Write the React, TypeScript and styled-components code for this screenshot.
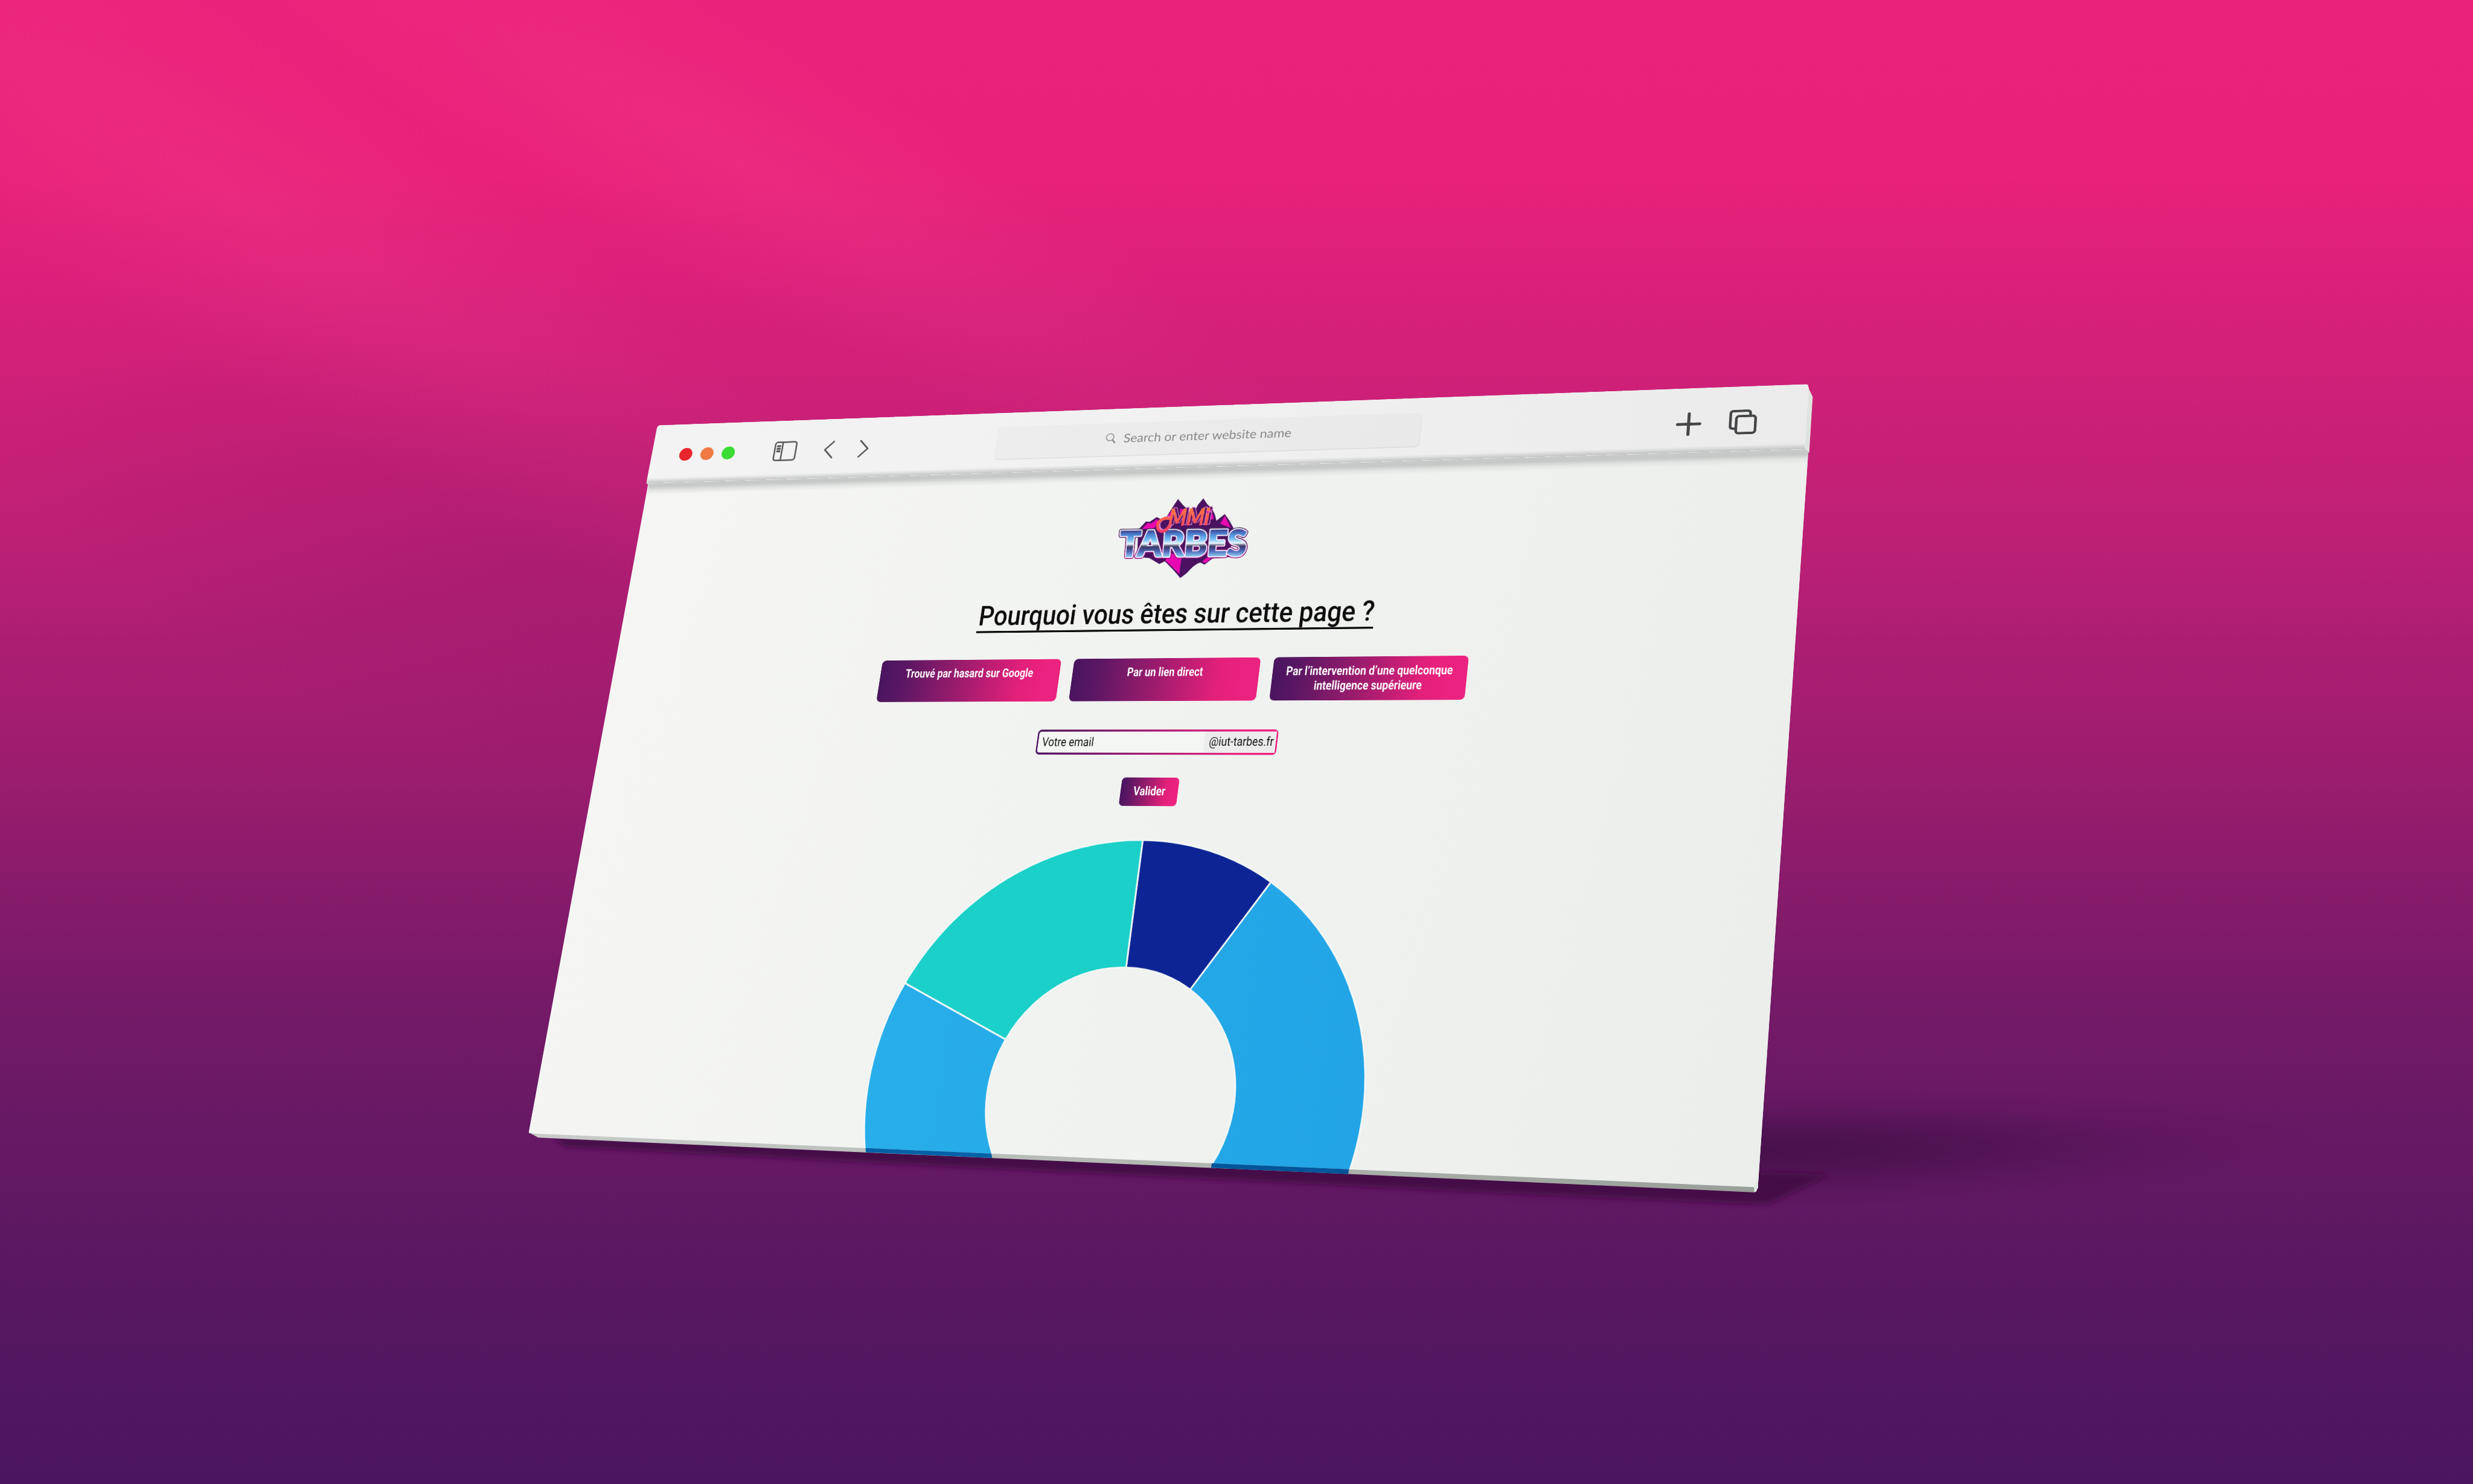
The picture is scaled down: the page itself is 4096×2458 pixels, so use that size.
import React, { useLayoutEffect, useRef, useState } from 'react';
import styled, { createGlobalStyle } from 'styled-components';

type Point = [number, number];

const SCALE = 4096 / 5000;

const GlobalStyle = createGlobalStyle`
  html, body { margin: 0; padding: 0; background: #4d155e; overflow: hidden; }
  *, *::before, *::after { box-sizing: border-box; }
`;

/* ---------- perspective helpers ---------- */

function solve(rows: number[][], rhs: number[]): number[] {
  const n = rhs.length;
  const m = rows.map((r, i) => [...r, rhs[i]]);
  for (let i = 0; i < n; i++) {
    let p = i;
    for (let j = i; j < n; j++) if (Math.abs(m[j][i]) > Math.abs(m[p][i])) p = j;
    [m[i], m[p]] = [m[p], m[i]];
    for (let j = 0; j < n; j++) {
      if (j === i) continue;
      const f = m[j][i] / m[i][i];
      for (let k = i; k <= n; k++) m[j][k] -= f * m[i][k];
    }
  }
  return m.map((r, i) => r[n] / r[i]);
}

/* matrix3d that carries a w×h box onto four corners (TL, TR, BR, BL) */
function project(w: number, h: number, corners: Point[]): string {
  const src: Point[] = [[0, 0], [w, 0], [w, h], [0, h]];
  const rows: number[][] = [];
  const rhs: number[] = [];
  src.forEach(([x, y], i) => {
    const u = corners[i][0] * SCALE;
    const v = corners[i][1] * SCALE;
    rows.push([x, y, 1, 0, 0, 0, -x * u, -y * u]);
    rhs.push(u);
    rows.push([0, 0, 0, x, y, 1, -x * v, -y * v]);
    rhs.push(v);
  });
  const [a, b, c, d, e, f, g, k] = solve(rows, rhs);
  return `matrix3d(${[a, d, 0, g, b, e, 0, k, 0, 0, 1, 0, c, f, 0, 1].map(n => n.toFixed(12)).join(',')})`;
}

const PAGE_MATRIX = project(2400, 1350, [[1312, 980], [3657, 914], [3555, 2402], [1069, 2291]]);
const BAR_MATRIX = project(2400, 136, [[1330, 860], [3656, 777], [3649, 908], [1307, 977]]);

const outline = (points: Point[]) =>
  `polygon(${points.map(([x, y]) => `${(x * SCALE).toFixed(2)}px ${(y * SCALE).toFixed(2)}px`).join(', ')})`;

const PAGE_OUTLINE = outline([[1312, 970], [3657, 900], [3555.5, 2380], [3554, 2403], [1078, 2294], [1069, 2290]]);
const BAR_OUTLINE = outline([
  [1308, 970], [1328, 866], [1330, 862], [1334, 860], [3652, 777], [3655, 778], [3657, 784], [3649, 908.5], [1307, 977.5],
]);

/* ---------- scene ---------- */

const Scene = styled.main`
  position: relative;
  width: 4096px;
  height: 2458px;
  overflow: hidden;
  background: linear-gradient(
    180deg,
    #eb227b 0%,
    #e8217a 12%,
    #d92079 20%,
    #cb2077 28%,
    #bd2075 36%,
    #ab1e72 44%,
    #991c6e 53%,
    #871b6b 60%,
    #741a67 68%,
    #671964 76%,
    #5c1862 84%,
    #521760 92%,
    #4c165e 100%
  );
`;

const Overlay = styled.svg`
  position: absolute;
  inset: 0;
  width: 4096px;
  height: 2458px;
`;

const Sheet = styled.div<{ $outline: string; $fill: string }>`
  position: absolute;
  inset: 0;
  background: ${p => p.$fill};
  clip-path: ${p => p.$outline};
`;

const Plane = styled.section<{ $w: number; $h: number; $matrix: string }>`
  position: absolute;
  left: 0;
  top: 0;
  width: ${p => p.$w}px;
  height: ${p => p.$h}px;
  transform-origin: 0 0;
  transform: ${p => p.$matrix};
`;

/* ---------- toolbar ---------- */

const Toolbar = styled(Plane)`
  display: flex;
  align-items: flex-start;
  padding-left: 64px;
  background:
    linear-gradient(180deg, transparent 91%, rgba(150, 156, 152, 0.5) 100%),
    linear-gradient(90deg, #f3f3f3 0%, #f1f1f1 45%, #ebebeb 100%);
`;

const Lights = styled.div`
  display: flex;
  gap: 19px;
  padding-top: 56px;
`;

const Light = styled.span<{ $c: string }>`
  width: 30px;
  height: 30px;
  border-radius: 50%;
  background: ${p => p.$c};
`;

const BarIcon = styled.svg<{ $ml: number; $mt: number }>`
  flex: none;
  margin-left: ${p => p.$ml}px;
  margin-top: ${p => p.$mt}px;
  overflow: visible;
`;

const Address = styled.div`
  display: flex;
  align-items: flex-start;
  width: 884px;
  height: 73px;
  margin: 32px 0 0 280px;
  padding-left: 236px;
  border-radius: 10px;
  background: linear-gradient(90deg, #ededed, #e9e9e9);
  box-shadow: 1px 1.5px 1px rgba(0, 0, 0, 0.08);
`;

const Placeholder = styled.span`
  height: 40px;
  margin: 14px 0 0 16px;
  font: 400 26.5px/40px Lato, "Open Sans", sans-serif;
  color: #868787;
  white-space: nowrap;
`;

/* ---------- web page ---------- */

const Page = styled(Plane)`
  display: flex;
  flex-direction: column;
  align-items: center;
  padding: 50px 10px 0 0;
  overflow: hidden;
  background:
    linear-gradient(180deg, #bfc2c0 0px, #c8cbc9 5px, #e2e4e2 13px, transparent 22px),
    linear-gradient(100deg, #f5f6f4 0%, #f1f3f0 45%, #ebeeeb 100%);
`;

const FONT = 'Roboto, "Noto Sans", sans-serif';

const FitBox = styled.span<{ $w: number }>`
  display: block;
  width: ${p => p.$w}px;
  white-space: nowrap;
`;

const FitInner = styled.span`
  display: inline-block;
  transform-origin: 0 50%;
`;

/* squeezes one line of text into a fixed measure */
function Fit({ w, children }: { w: number; children: React.ReactNode }) {
  const ref = useRef<HTMLSpanElement>(null);
  const [k, setK] = useState(1);
  useLayoutEffect(() => {
    if (ref.current) setK(w / ref.current.offsetWidth);
  }, [w]);
  return (
    <FitBox $w={w}>
      <FitInner ref={ref} style={{ transform: `scaleX(${k})` }}>{children}</FitInner>
    </FitBox>
  );
}

const Logo = styled.svg`
  flex: none;
  width: 290px;
  height: 180px;
  overflow: visible;
`;

const Title = styled.h1`
  flex: none;
  width: 813px;
  height: 65px;
  margin: 38px 0 0;
  padding-left: 1px;
  border-bottom: 4px solid #0d0d0d;
  font: 500 56.5px/60px ${FONT};
  color: #0d0d0d;
`;

const Choices = styled.div`
  display: grid;
  flex: none;
  grid-template-columns: repeat(3, 381px);
  gap: 27px;
  margin-top: 54.5px;
`;

const gradient = 'linear-gradient(94deg, #4b155f 2%, #5b1763 14%, #a31c6e 48%, #e3207a 78%, #ec2280 92%)';

const Choice = styled.button`
  display: flex;
  flex-direction: column;
  align-items: center;
  justify-content: flex-start;
  height: 86px;
  padding: 13px 0 0;
  border: 0;
  border-radius: 9px;
  background: ${gradient};
  color: #fff;
  font: 700 24.5px/29.5px ${FONT};
`;

const Email = styled.div`
  display: flex;
  flex: none;
  justify-content: space-between;
  width: 488px;
  height: 50px;
  margin-top: 57.5px;
  padding-left: 8px;
  border: 4px solid transparent;
  border-width: 4px 3px;
  border-radius: 8px;
  background:
    linear-gradient(#f4f6f4, #f4f6f4) padding-box,
    linear-gradient(90deg, #4b155f 0%, #ee2280 85%) border-box;
  font: 400 24.5px/42px ${FONT};
  color: #161616;
`;

const Suffix = styled.span`
  width: 143px;
  padding-left: 10px;
  line-height: 40px;
  background: #ececec;
`;

const Submit = styled.button`
  display: flex;
  flex: none;
  justify-content: center;
  width: 116px;
  height: 56px;
  margin-top: 45px;
  padding: 11px 0 0;
  border: 0;
  border-radius: 8px;
  background: ${gradient};
  color: #fff;
  font: 700 24.5px/32px ${FONT};
`;

const Chart = styled.svg`
  flex: none;
  width: 978px;
  height: 978px;
  margin-top: 65.6px;
`;

const SLICES = [
  { value: 1, color: '#0d2594' },
  { value: 8, color: 'url(#sky)' },
  { value: 2, color: '#1bd0c8' },
];

function slicePath(from: number, to: number, R: number, r: number): string {
  const pt = (a: number, q: number) => `${(489 + q * Math.sin(a)).toFixed(2)} ${(489 - q * Math.cos(a)).toFixed(2)}`;
  const large = to - from > Math.PI ? 1 : 0;
  return `M${pt(from, R)}A${R} ${R} 0 ${large} 1 ${pt(to, R)}L${pt(to, r)}A${r} ${r} 0 ${large} 0 ${pt(from, r)}Z`;
}

function Donut() {
  const total = SLICES.reduce((s, x) => s + x.value, 0);
  let angle = 0;
  return (
    <Chart viewBox="0 0 978 978">
      <defs>
        <linearGradient id="sky" x1="0" x2="1" y1="0" y2="0">
          <stop offset="0" stopColor="#28aeea" />
          <stop offset="1" stopColor="#22a4e6" />
        </linearGradient>
      </defs>
      {SLICES.map(s => {
        const from = angle;
        angle += (s.value / total) * Math.PI * 2;
        return <path key={s.color} d={slicePath(from, angle, 488.5, 243.5)} fill={s.color} stroke="#f4f8f8" strokeWidth="3.2" />;
      })}
    </Chart>
  );
}

function Brand() {
  return (
    <Logo viewBox="0 0 290 180">
      <defs>
        <linearGradient id="chrome" x1="0" x2="0" y1="284" y2="446" gradientUnits="userSpaceOnUse">
          <stop offset="0" stopColor="#3f4a98" />
          <stop offset="0.18" stopColor="#4f8fdc" />
          <stop offset="0.36" stopColor="#7fc4f4" />
          <stop offset="0.5" stopColor="#eef8ff" />
          <stop offset="0.56" stopColor="#77788f" />
          <stop offset="0.62" stopColor="#3a3868" />
          <stop offset="0.78" stopColor="#4d64b4" />
          <stop offset="1" stopColor="#8fd0f8" />
        </linearGradient>
        <linearGradient id="neon" x1="0" x2="0" y1="150" y2="290" gradientUnits="userSpaceOnUse">
          <stop offset="0" stopColor="#ff7a45" />
          <stop offset="1" stopColor="#fb3a68" />
        </linearGradient>
        <linearGradient id="rim" x1="0" x2="0" y1="260" y2="460" gradientUnits="userSpaceOnUse">
          <stop offset="0" stopColor="#4b4560" />
          <stop offset="0.45" stopColor="#5b1a66" />
          <stop offset="1" stopColor="#a01380" />
        </linearGradient>
      </defs>
      <g transform="matrix(.3417 .00733 .0433 .3367 -65 -20.7)">
        <path d="M304 274 L352 222 L375 224 L418 195 L440 206 L476 196 L504 150 L547 83 L575 118 L604 146 L622 176 L655 146 L668 120 L701 80 L725 116 L752 142 L770 178 L780 218 L830 177 L856 214 L882 262 L860 440 L756 450 L708 487 L682 474 C640 490 620 520 600 540 L562 570 L520 520 L468 468 L434 484 L375 448 L300 440 Z" fill="#4a1260" />
        <path d="M326 270 L362 232 L384 234 L420 206 L428 226 L404 262 Z M476 200 L512 150 L530 138 L520 200 Z M560 142 L590 150 L600 168 L560 176 Z M700 160 L722 128 L750 150 L764 206 L740 214 Z M804 238 L830 186 L866 262 Z M470 462 L505 415 L568 450 L556 545 L520 508 Z M694 468 L720 446 L752 448 L712 478 Z" fill="#e808b0" />
        <g transform="translate(0 444) skewX(-5) rotate(-.6) translate(0 -444)" fontFamily="Lato, sans-serif" fontWeight="900" fontSize="216" strokeLinejoin="round">
          <text x="186" y="441" textLength="768" lengthAdjust="spacingAndGlyphs" fill="none" stroke="url(#rim)" strokeWidth="30">TARBES</text>
          <text x="186" y="441" textLength="768" lengthAdjust="spacingAndGlyphs" fill="none" stroke="#fbe9fb" strokeWidth="20">TARBES</text>
          <text x="186" y="441" textLength="768" lengthAdjust="spacingAndGlyphs" fill="url(#chrome)" stroke="url(#chrome)" strokeWidth="7">TARBES</text>
        </g>
        <g strokeLinejoin="round" strokeLinecap="round">
          <path d="M500 204 C450 196 414 226 424 264 C436 292 470 292 494 250" fill="none" stroke="#d67fc8" strokeWidth="16" transform="translate(10 -6)" />
          <path d="M500 204 C450 196 414 226 424 264 C436 292 470 292 494 250" fill="none" stroke="url(#neon)" strokeWidth="18" />
          <g fontFamily="Lato, sans-serif" fontWeight="900" fontStyle="italic" fontSize="146" transform="translate(0 258) skewX(-6) rotate(-1) translate(0 -258)">
            <text x="498" y="252" textLength="250" lengthAdjust="spacingAndGlyphs" fill="#5a1468" stroke="#d67fc8" strokeWidth="5">MMi</text>
            <text x="484" y="258" textLength="250" lengthAdjust="spacingAndGlyphs" fill="url(#neon)">MMi</text>
          </g>
        </g>
      </g>
    </Logo>
  );
}

export default function App() {
  return (
    <>
      <GlobalStyle />
      <Scene>
        <Overlay viewBox="0 0 5000 3000">
          <defs>
            <filter id="soft" filterUnits="userSpaceOnUse" x="900" y="2100" width="3400" height="600"><feGaussianBlur stdDeviation="6" /></filter>
            <radialGradient id="glow">
              <stop offset="0" stopColor="#ff5aa0" stopOpacity="0.15" />
              <stop offset="0.5" stopColor="#ff5aa0" stopOpacity="0.07" />
              <stop offset="1" stopColor="#ff5aa0" stopOpacity="0" />
            </radialGradient>
            <radialGradient id="dusk">
              <stop offset="0" stopColor="#7a1060" stopOpacity="0.2" />
              <stop offset="0.5" stopColor="#7a1060" stopOpacity="0.1" />
              <stop offset="1" stopColor="#7a1060" stopOpacity="0" />
            </radialGradient>
            <radialGradient id="cast">
              <stop offset="0" stopColor="#420f48" stopOpacity="0.85" />
              <stop offset="0.35" stopColor="#420f48" stopOpacity="0.6" />
              <stop offset="0.7" stopColor="#461049" stopOpacity="0.2" />
              <stop offset="1" stopColor="#461049" stopOpacity="0" />
            </radialGradient>
          </defs>
          <ellipse cx="500" cy="420" rx="1500" ry="330" transform="rotate(32 500 420)" fill="url(#glow)" />
          <ellipse cx="1500" cy="330" rx="1300" ry="260" transform="rotate(28 1500 330)" fill="url(#glow)" />
          <ellipse cx="1080" cy="1130" rx="1100" ry="420" transform="rotate(14 1080 1130)" fill="url(#dusk)" />
          <ellipse cx="3560" cy="2325" rx="1130" ry="125" fill="url(#cast)" transform="rotate(-1 3560 2325)" />
          <path d="M1120 2300 L3560 2370 L3700 2375 L3575 2434 L3500 2432 L3000 2410 L2500 2386 L1800 2352 L1140 2318 Z" fill="#451047" filter="url(#soft)" />
        </Overlay>

        <Sheet $outline={PAGE_OUTLINE} $fill="linear-gradient(90deg, #f5f6f4 30%, #ebeeeb 85%)">
          <Page $w={2400} $h={1350} $matrix={PAGE_MATRIX}>
            <Brand />
            <Title><Fit w={811}>Pourquoi vous êtes sur cette page ?</Fit></Title>
            <Choices>
              <Choice><Fit w={272}>Trouvé par hasard sur Google</Fit></Choice>
              <Choice><Fit w={155}>Par un lien direct</Fit></Choice>
              <Choice>
                <Fit w={326}>Par l’intervention d’une quelconque</Fit>
                <Fit w={211}>intelligence supérieure</Fit>
              </Choice>
            </Choices>
            <Email>
              <Fit w={107}>Votre email</Fit>
              <Suffix><Fit w={129}>@iut-tarbes.fr</Fit></Suffix>
            </Email>
            <Submit><Fit w={65}>Valider</Fit></Submit>
            <Donut />
          </Page>
        </Sheet>

        <Overlay viewBox="0 0 5000 3000">
          <defs>
            <linearGradient id="edge" x1="1070" x2="3550" y1="0" y2="0" gradientUnits="userSpaceOnUse">
              <stop offset="0" stopColor="#c9ccca" />
              <stop offset="0.5" stopColor="#b3b8b3" />
              <stop offset="1" stopColor="#989e98" />
            </linearGradient>
          </defs>
          <path d="M1069 2289 L1078 2291.5 L3546 2400 L3554 2395 L3552 2408 L3547 2410.5 L1088 2300 Z" fill="url(#edge)" />
          <path d="M1750 2321 L2004.5 2332.2 L2006 2341 L1750.5 2329.6 Z" fill="#0461a8" />
          <path d="M2450 2351.8 L2727.5 2364 L2726 2373.5 L2448.5 2361 Z" fill="#02559a" />
          <path d="M3546 2400 L3554.5 2380 L3554 2402 L3550 2409.5 L3547 2410 Z" fill="#e3e6e3" />
          <path d="M3653 777 L3665 802 L3658 914 L3648 908 L3655 790 Z" fill="#dfe3df" />
          <path d="M1307 976 L3649 907 L3658 914 L3657 916 L1312 983 Z" fill="#c6c9c7" />
        </Overlay>

        <Sheet $outline={BAR_OUTLINE} $fill="linear-gradient(90deg, #f3f3f3 30%, #ebebeb 88%)">
          <Toolbar $w={2400} $h={136} $matrix={BAR_MATRIX}>
            <Lights>
              <Light $c="#e9262e" />
              <Light $c="#f07a44" />
              <Light $c="#3bdc33" />
            </Lights>
            <BarIcon $ml={89} $mt={48} width="52" height="46" viewBox="0 0 52 46" fill="none" stroke="#58595b" strokeWidth="3.4">
              <rect x="2" y="2" width="48" height="42" rx="5" />
              <path d="M18.5 2V44" />
              <path d="M6 11H15M6 17H15M6 23H15" strokeWidth="4.6" />
            </BarIcon>
            <BarIcon $ml={62} $mt={50} width="22" height="42" viewBox="0 0 22 42" fill="none" stroke="#58595b" strokeWidth="3.6" strokeLinecap="round" strokeLinejoin="round">
              <path d="M20 2.5L2 21L20 39.5" />
            </BarIcon>
            <BarIcon $ml={56} $mt={50} width="22" height="42" viewBox="0 0 22 42" fill="none" stroke="#58595b" strokeWidth="3.6" strokeLinecap="round" strokeLinejoin="round">
              <path d="M2 2.5L20 21L2 39.5" />
            </BarIcon>
            <Address>
              <BarIcon $ml={0} $mt={23} width="22" height="22" viewBox="0 0 22 22" fill="none" stroke="#868787" strokeLinecap="round">
                <circle cx="9" cy="8.5" r="7.8" strokeWidth="1.8" />
                <path d="M14.5 14.5L20 20.5" strokeWidth="3.2" />
              </BarIcon>
              <Placeholder><Fit w={349}>Search or enter website name</Fit></Placeholder>
            </Address>
            <BarIcon $ml={497} $mt={51} width="48" height="50" viewBox="0 0 48 50" fill="none" stroke="#454648" strokeWidth="5.8" strokeLinecap="round">
              <path d="M24 3V47M3 25H45" />
            </BarIcon>
            <BarIcon $ml={52} $mt={49} width="52" height="52" viewBox="0 0 52 52" fill="none" stroke="#454648" strokeWidth="5" strokeLinejoin="round">
              <path d="M12 39.5H8Q2.5 39.5 2.5 34V8Q2.5 2.5 8 2.5H34Q39.5 2.5 39.5 8V12" />
              <rect x="13.5" y="13.5" width="36" height="36" rx="5.5" />
            </BarIcon>
          </Toolbar>
        </Sheet>
      </Scene>
    </>
  );
}
